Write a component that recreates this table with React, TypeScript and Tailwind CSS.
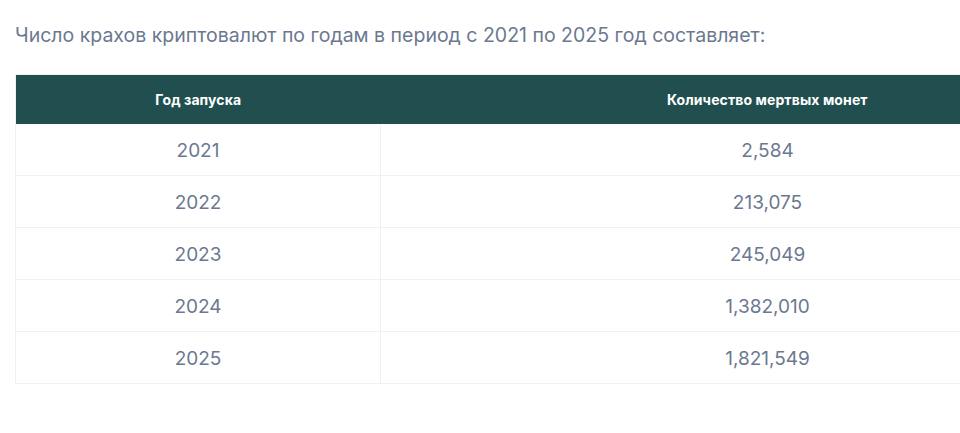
import React from "react";

const rows = [
  ["2021", "2,584"],
  ["2022", "213,075"],
  ["2023", "245,049"],
  ["2024", "1,382,010"],
  ["2025", "1,821,549"],
];

export default function App() {
  return (
    <div
      className="w-[960px] h-[433px] overflow-hidden bg-white"
      style={{ fontFamily: "Inter, 'Noto Sans', sans-serif" }}
    >
      <div className="pl-[15px] pt-[21px]">
        <p className="text-[19.5px] leading-[28px] text-[#6b7890] whitespace-nowrap">
          Число крахов криптовалют по годам в период с 2021 по 2025 год составляет:
        </p>
        <table className="mt-[25px] w-[1140px] border-collapse border border-[#eef0f3]">
          <thead>
            <tr className="bg-[#214f4f] h-[49px]">
              <th className="w-[365px] text-[14px] font-bold text-white text-center tracking-[0.1px]">
                Год запуска
              </th>
              <th className="text-[14px] font-bold text-white text-center tracking-[0.1px]">
                Количество мертвых монет
              </th>
            </tr>
          </thead>
          <tbody>
            {rows.map(([y, v]) => (
              <tr key={y} className="h-[52px] border-b border-[#eef0f3]">
                <td className="border-r border-[#eef0f3] pt-[3px] text-center text-[19px] text-[#6b7890]">
                  {y}
                </td>
                <td className="pt-[3px] text-center text-[19px] text-[#6b7890]">{v}</td>
              </tr>
            ))}
          </tbody>
        </table>
      </div>
    </div>
  );
}
